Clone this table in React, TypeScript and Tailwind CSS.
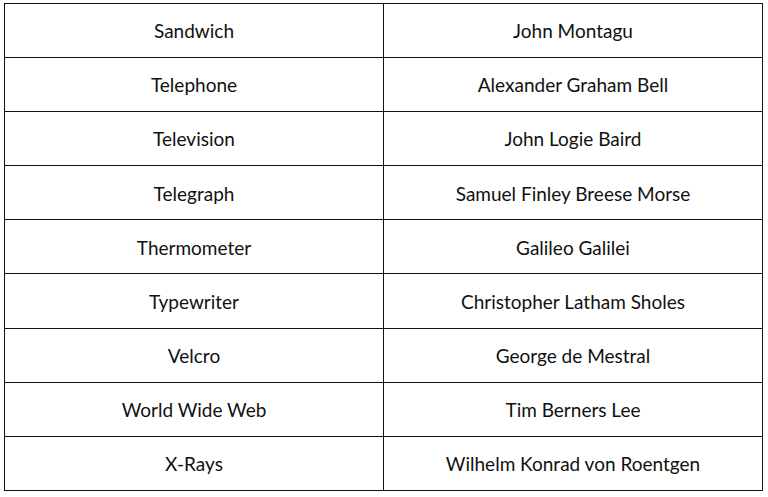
const rows = [
  ["Sandwich", "John Montagu"],
  ["Telephone", "Alexander Graham Bell"],
  ["Television", "John Logie Baird"],
  ["Telegraph", "Samuel Finley Breese Morse"],
  ["Thermometer", "Galileo Galilei"],
  ["Typewriter", "Christopher Latham Sholes"],
  ["Velcro", "George de Mestral"],
  ["World Wide Web", "Tim Berners Lee"],
  ["X-Rays", "Wilhelm Konrad von Roentgen"],
];

const App = () => {
  return (
    <main className="w-[768px] h-[497px] bg-white pt-[3px] pl-[4px] overflow-hidden font-['Lato',sans-serif] text-[#111]">
      <table className="w-[759px] border-collapse table-fixed">
        <tbody>
          {rows.map(([invention, inventor]) => (
            <tr key={invention} className="h-[54.1px]">
              <td className="border-[1.5px] border-[#111] text-center text-[19px] pt-[2px]">
                {invention}
              </td>
              <td className="border-[1.5px] border-[#111] text-center text-[19px] pt-[2px]">
                {inventor}
              </td>
            </tr>
          ))}
        </tbody>
      </table>
    </main>
  );
};

export default App;
